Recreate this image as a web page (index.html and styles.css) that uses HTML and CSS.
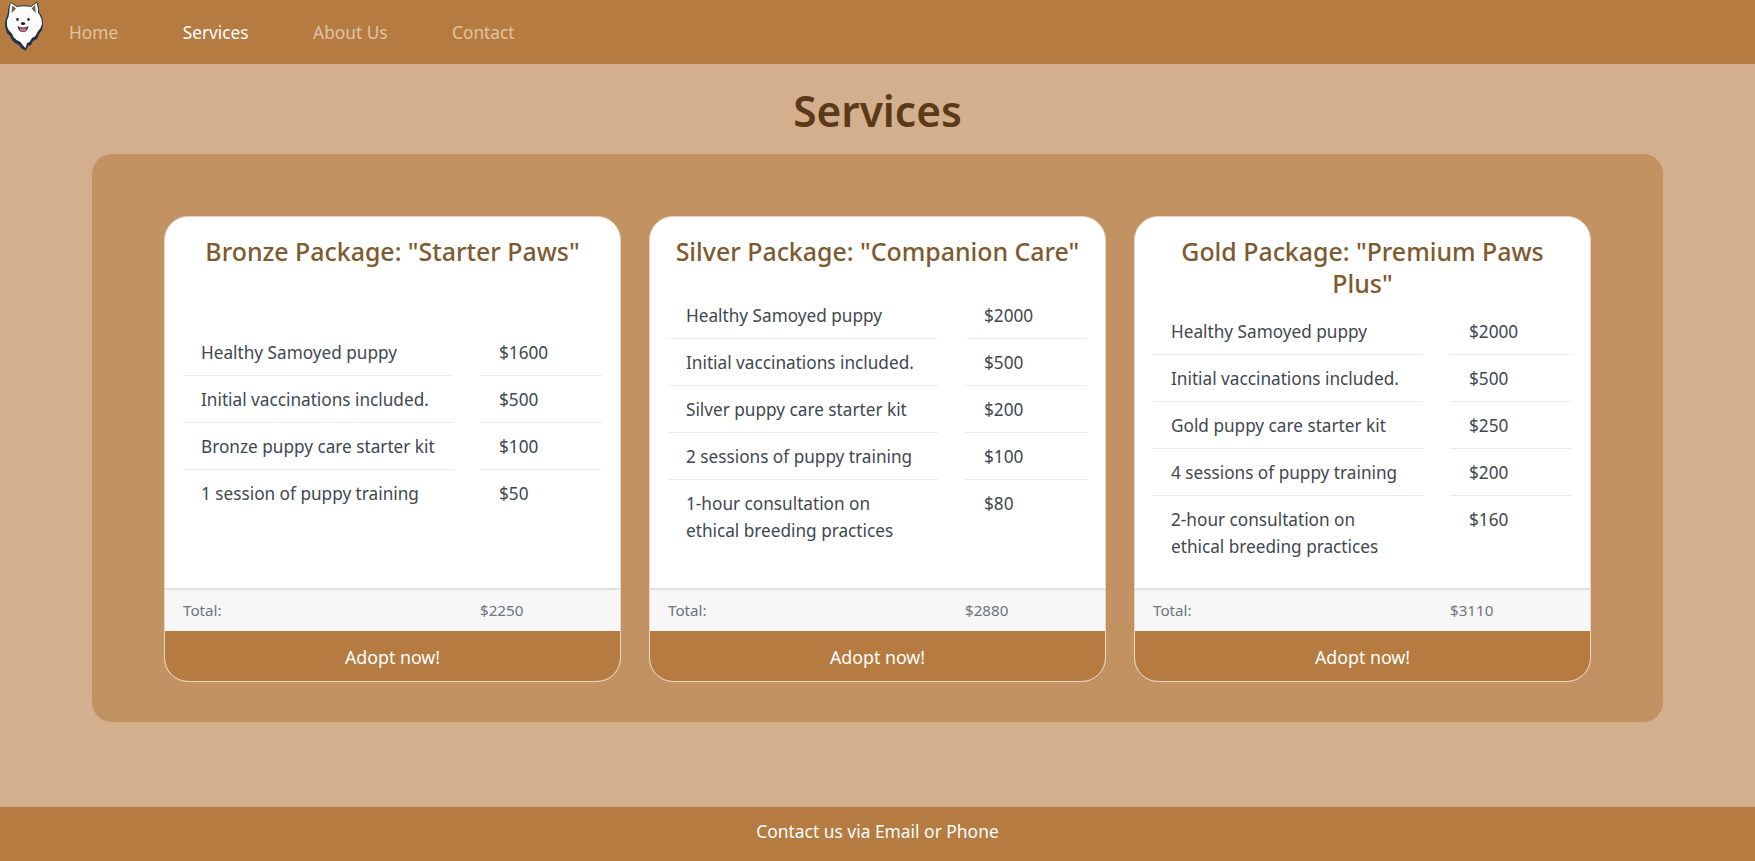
FILE: index.html
```html
<!DOCTYPE html>
<html lang="en">
<head>
<meta charset="utf-8">
<title>Services</title>
<link rel="stylesheet" href="styles.css">
</head>
<body>
<nav class="navbar">
  <svg class="logo" viewBox="0 0 40 50" aria-label="Samoyed logo">
    <path d="M6.500 1 L13 5 Q20 3.500 27 5 L33 .5 Q35.500 6 35 11 Q39.500 17 39 23 L38 29 L35 33 L33 38 L29 40 L27 44 L24 45 L22 49.500 L18 48 L15 44 L11 42 L8 39 L6 35 L3 32 L1 25 L1.500 19 Q4 14 4 10 Q4.500 5 6.500 1Z" fill="#20304a"/>
    <path d="M6.800 2 L13 6 Q20 4.600 27 6 L32.500 1.800 Q34.500 7 34 11.500 Q38.300 17 38 23 L36.500 27 L33.500 31 L31.500 35 L28 37 L25.500 41 L23 42 L21.500 47 L18.500 44 L16.500 41 L12.500 39 L9.500 36 L7.500 32 L4.500 29 L3 25 L3 19.500 Q5.300 15 5.300 10.500 Q5.500 6 6.800 2Z" fill="#fbfbf9"/>
    <path d="M8.200 4.500 L12 7.500 L7.500 12Z M31 4 L27.500 7.500 L32 12Z" fill="#77604f"/>
    <ellipse cx="13.500" cy="18.500" rx="1.300" ry="1.400" fill="#2a2a30"/>
    <ellipse cx="24.500" cy="18.500" rx="1.300" ry="1.400" fill="#2a2a30"/>
    <ellipse cx="19" cy="22.500" rx="2.100" ry="1.600" fill="#1d1d24"/>
    <path d="M13.500 25 Q19 28 24.500 25 Q23.500 31 19 31 Q14.500 31 13.500 25Z" fill="#3b2c33"/>
    <path d="M15.500 27 Q19 28.200 22.500 27 Q22 30.500 19 30.500 Q16 30.500 15.500 27Z" fill="#d9748a"/>
  </svg>
  <ul class="nav-list">
    <li><a class="nav-link" href="#">Home</a></li>
    <li><a class="nav-link active" href="#">Services</a></li>
    <li><a class="nav-link" href="#">About Us</a></li>
    <li><a class="nav-link" href="#">Contact</a></li>
  </ul>
</nav>
<main class="main">
  <h1 class="page-title">Services</h1>
  <section class="panel">
    <article class="card">
      <div class="card-body">
        <h2 class="card-title">Bronze Package: "Starter Paws"</h2>
        <div class="items">
          <div class="cell">Healthy Samoyed puppy</div><div class="cell price">$1600</div>
          <div class="cell">Initial vaccinations included.</div><div class="cell price">$500</div>
          <div class="cell">Bronze puppy care starter kit</div><div class="cell price">$100</div>
          <div class="cell last">1 session of puppy training</div><div class="cell price last">$50</div>
        </div>
      </div>
      <div class="total"><span>Total:</span><span>$2250</span></div>
      <a class="adopt" href="#">Adopt now!</a>
    </article>
    <article class="card">
      <div class="card-body">
        <h2 class="card-title">Silver Package: "Companion Care"</h2>
        <div class="items">
          <div class="cell">Healthy Samoyed puppy</div><div class="cell price">$2000</div>
          <div class="cell">Initial vaccinations included.</div><div class="cell price">$500</div>
          <div class="cell">Silver puppy care starter kit</div><div class="cell price">$200</div>
          <div class="cell">2 sessions of puppy training</div><div class="cell price">$100</div>
          <div class="cell last">1-hour consultation on ethical breeding practices</div><div class="cell price last">$80</div>
        </div>
      </div>
      <div class="total"><span>Total:</span><span>$2880</span></div>
      <a class="adopt" href="#">Adopt now!</a>
    </article>
    <article class="card">
      <div class="card-body">
        <h2 class="card-title">Gold Package: "Premium Paws Plus"</h2>
        <div class="items">
          <div class="cell">Healthy Samoyed puppy</div><div class="cell price">$2000</div>
          <div class="cell">Initial vaccinations included.</div><div class="cell price">$500</div>
          <div class="cell">Gold puppy care starter kit</div><div class="cell price">$250</div>
          <div class="cell">4 sessions of puppy training</div><div class="cell price">$200</div>
          <div class="cell last">2-hour consultation on ethical breeding practices</div><div class="cell price last">$160</div>
        </div>
      </div>
      <div class="total"><span>Total:</span><span>$3110</span></div>
      <a class="adopt" href="#">Adopt now!</a>
    </article>
  </section>
</main>
<footer class="footer">Contact us via Email or Phone</footer>
</body>
</html>
```

FILE: styles.css
```css
* { box-sizing: border-box; }
html, body { height: 100%; }
body {
  margin: 0;
  min-height: 100vh;
  display: flex;
  flex-direction: column;
  background: #d3af8d;
  font-family: "Noto Sans", "Open Sans", sans-serif;
  font-size: 17.2px;
  color: #41474e;
}
.navbar {
  height: 64px;
  flex: none;
  background: #b57b40;
  display: flex;
  align-items: flex-start;
  padding-left: 4px;
}
.logo { width: 40px; height: 50px; margin-top: 1px; flex: none; filter: blur(.4px); }
.nav-list {
  list-style: none;
  margin: 0;
  padding: 0 0 0 25px;
  display: flex;
  gap: 64.5px;
  height: 64px;
  align-items: center;
}
.nav-link { color: #e1c4a3; text-decoration: none; font-size: 17.3px; }
.nav-link.active { color: #fff; }
.main {
  flex: 1;
  display: flex;
  flex-direction: column;
  padding: 0 92px;
}
.page-title {
  margin: 0;
  height: 90px;
  line-height: 93px;
  text-align: center;
  font-size: 42.4px;
  font-weight: 600;
  color: #5a3a18;
}
.panel {
  height: 568px;
  background: #c29263;
  border-radius: 20px;
  padding: 62px 72px 0;
  display: grid;
  grid-template-columns: repeat(3, 457px);
  justify-content: space-between;
  align-items: start;
}
.card {
  height: 466px;
  background: #fff;
  border: 1px solid #e6d5c1;
  border-radius: 24px;
  overflow: hidden;
  display: flex;
  flex-direction: column;
}
.card-body {
  flex: 1;
  display: flex;
  flex-direction: column;
  padding: 18px 18px 10px;
}
.card-title {
  margin: 0;
  text-align: center;
  font-size: 24.9px;
  line-height: 32px;
  font-weight: 500;
  color: #7d5a2f;
}
.items {
  margin: auto 0;
  display: grid;
  grid-template-columns: 270px 122px;
  column-gap: 27px;
  line-height: 27px;
}
.cell {
  padding: 10px 12px 9px 18px;
  border-bottom: 1px solid #e9ecef;
}
.cell.price { padding-left: 19px; }
.cell.last { border-bottom: 0; }
.total {
  height: 43px;
  flex: none;
  display: grid;
  grid-template-columns: 297px auto;
  align-items: center;
  padding: 0 0 2px 18px;
  background: #f7f7f7;
  border-top: 2px solid #e0e0e0;
  color: #6c757d;
  font-size: 15.2px;
}
.adopt {
  height: 50px;
  flex: none;
  display: flex;
  align-items: center;
  justify-content: center;
  padding-top: 1px;
  background: #b57b40;
  color: #fff;
  text-decoration: none;
  font-size: 17.8px;
}
.footer {
  height: 54px;
  flex: none;
  background: #b57b40;
  color: #fff;
  display: flex;
  align-items: center;
  justify-content: center;
  padding-bottom: 6px;
  font-size: 17.4px;
}
```
